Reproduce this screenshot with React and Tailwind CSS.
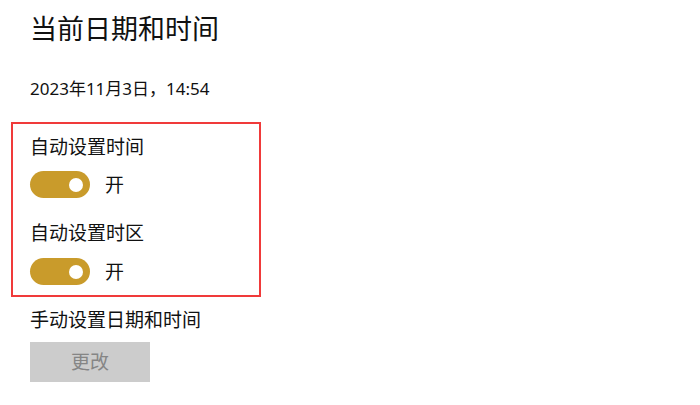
import React from 'react';

const font = { fontFamily: '"Noto Sans", "Noto Sans CJK SC", sans-serif' };

function Toggle({ on = true }) {
  return (
    <div className="flex items-center h-[27px]">
      <div
        className={`w-[60px] h-[27px] rounded-full flex items-center px-[7px] ${
          on ? 'bg-[#c99b2b] justify-end' : 'bg-white border-2 border-[#333] justify-start'
        }`}
      >
        <div className="w-[14px] h-[14px] rounded-full bg-white" />
      </div>
      <span className="ml-[15px] text-[19px] leading-[26px] text-[#111]">{on ? '开' : '关'}</span>
    </div>
  );
}

export default function App() {
  return (
    <div className="w-[700px] h-[405px] bg-white pl-[30px] pt-[11px] text-[#111]" style={font}>
      <h1 className="text-[27px] leading-[36px] font-normal">当前日期和时间</h1>
      <div className="mt-[30px] text-[17px] leading-[24px]">2023年11月3日，14:54</div>

      {/* auto settings group */}
      <div className="mt-[21px] -ml-[19px] w-[250px] border-2 border-[#f03a3a] pl-[17px] pt-[10px] pb-[10px]">
        <div className="text-[19px] leading-[26px]">自动设置时间</div>
        <div className="mt-[11px]">
          <Toggle />
        </div>
        <div className="mt-[22px] text-[19px] leading-[26px]">自动设置时区</div>
        <div className="mt-[12px]">
          <Toggle />
        </div>
      </div>

      <div className="mt-[10px] text-[19px] leading-[26px]">手动设置日期和时间</div>
      <button
        disabled
        className="mt-[9px] w-[120px] h-[40px] bg-[#cccccc] text-[#858585] text-[19px] flex items-center justify-center"
      >
        更改
      </button>
    </div>
  );
}
